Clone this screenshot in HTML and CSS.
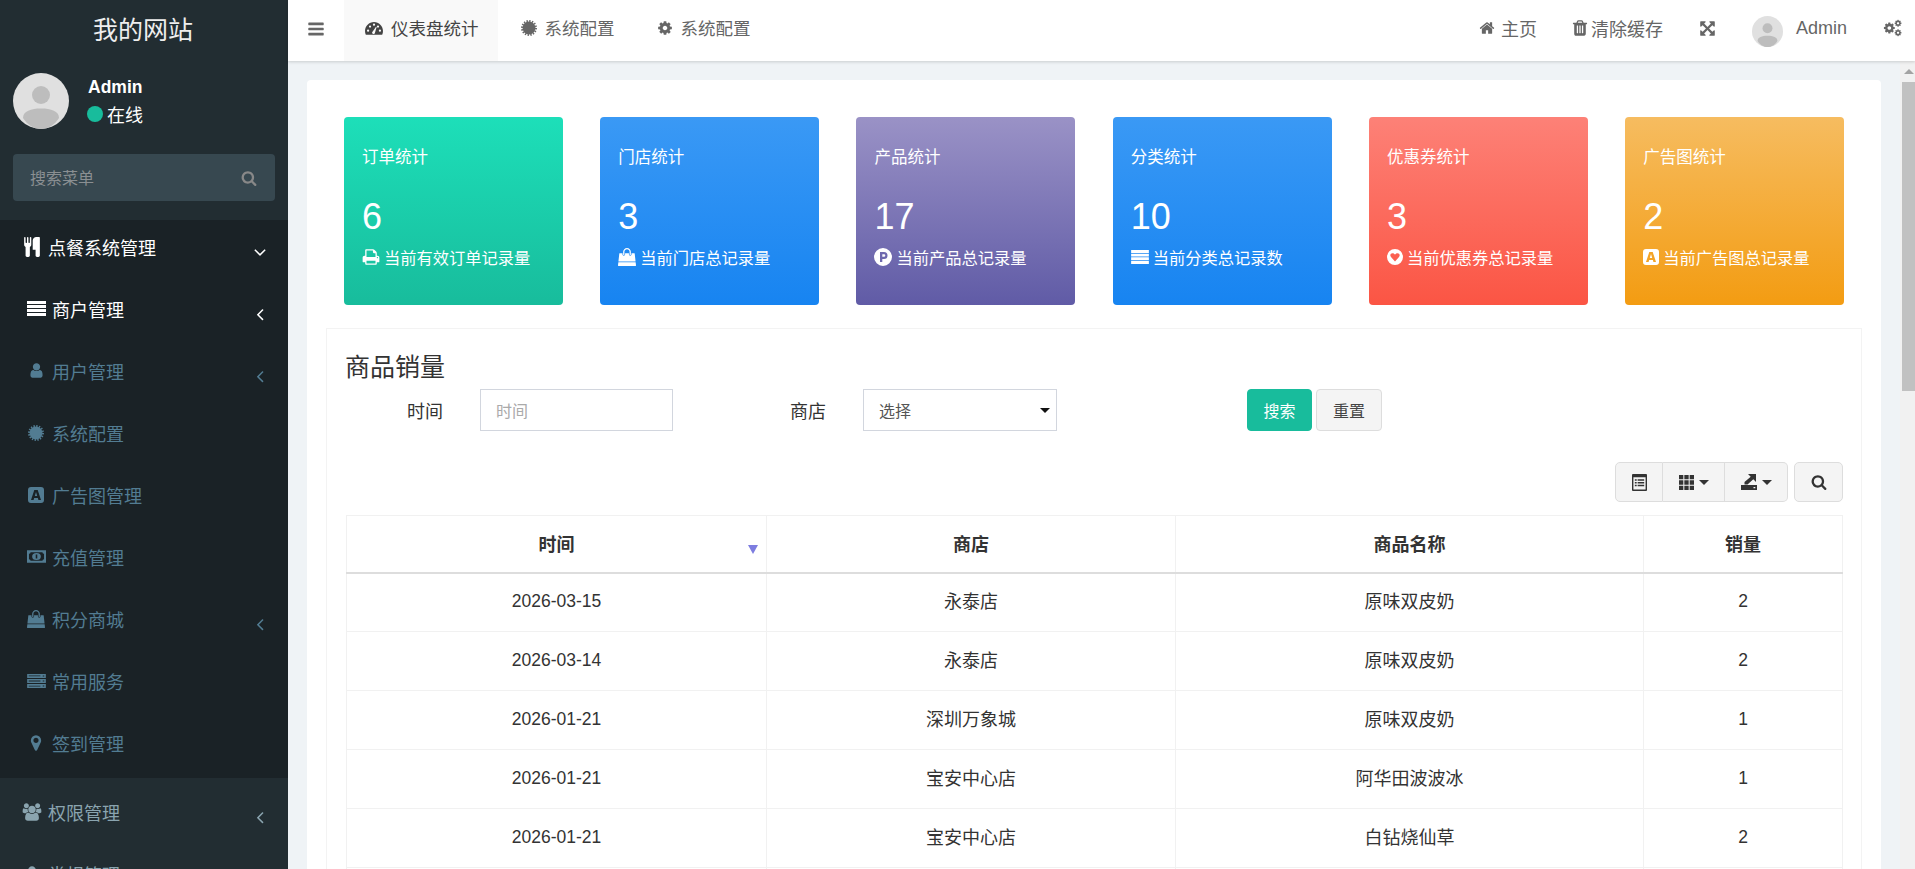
FILE: index.html
```html
<!DOCTYPE html>
<html lang="zh-CN">
<head>
<meta charset="utf-8">
<title>我的网站</title>
<link rel="stylesheet" href="styles.css">
</head>
<body>
<svg class="sprite" xmlns="http://www.w3.org/2000/svg">
  <symbol id="i-bars" viewBox="0 0 1792 1792"><path d="M1664 1344v128q0 26-19 45t-45 19h-1408q-26 0-45-19t-19-45v-128q0-26 19-45t45-19h1408q26 0 45 19t19 45zm0-512v128q0 26-19 45t-45 19h-1408q-26 0-45-19t-19-45v-128q0-26 19-45t45-19h1408q26 0 45 19t19 45zm0-512v128q0 26-19 45t-45 19h-1408q-26 0-45-19t-19-45v-128q0-26 19-45t45-19h1408q26 0 45 19t19 45z"/></symbol>
  <symbol id="i-search" viewBox="0 0 1792 1792"><path d="M1216 832q0-185-131.500-316.500t-316.500-131.500-316.500 131.500-131.500 316.500 131.500 316.500 316.500 131.500 316.500-131.500 131.500-316.500zm512 832q0 52-38 90t-90 38q-54 0-90-38l-343-342q-179 124-399 124-143 0-273.500-55.500t-225-150-150-225-55.500-273.500 55.500-273.500 150-225 225-150 273.500-55.500 273.500 55.500 225 150 150 225 55.500 273.500q0 220-124 399l343 343q37 37 37 90z"/></symbol>
  <symbol id="i-home" viewBox="0 0 1792 1792"><path d="M1472 992v480q0 26-19 45t-45 19h-384v-384h-256v384h-384q-26 0-45-19t-19-45v-480q0-1 .5-3t.5-3l575-474 575 474q1 2 1 6zm223-69l-62 74q-8 9-21 11h-3q-13 0-21-7l-692-577-692 577q-12 8-24 7-13-2-21-11l-62-74q-8-10-7-23.500t11-21.500l719-599q32-26 76-26t76 26l244 204v-195q0-14 9-23t23-9h192q14 0 23 9t9 23v408l219 182q10 8 11 21.500t-7 23.500z"/></symbol>
  <symbol id="i-user" viewBox="0 0 1792 1792"><path d="M1536 1399q0 109-62.500 187t-150.500 78h-854q-88 0-150.500-78t-62.500-187q0-85 8.500-160.500t31.500-152 58.500-131 94-89 134.500-34.500q131 128 313 128t313-128q76 0 134.500 34.500t94 89 58.500 131 31.500 152 8.500 160.500zm-256-887q0 159-112.500 271.500t-271.500 112.500-271.500-112.500-112.500-271.500 112.500-271.500 271.500-112.500 271.500 112.500 112.500 271.500z"/></symbol>
  <symbol id="i-left" viewBox="0 0 1792 1792"><path d="M1203 544q0 13-10 23l-393 393 393 393q10 10 10 23t-10 23l-50 50q-10 10-23 10t-23-10l-466-466q-10-10-10-23t10-23l466-466q10-10 23-10t23 10l50 50q10 10 10 23z"/></symbol>
  <symbol id="i-down" viewBox="0 0 1792 1792"><path d="M1395 736q0 13-10 23l-466 466q-10 10-23 10t-23-10l-466-466q-10-10-10-23t10-23l50-50q10-10 23-10t23 10l393 393 393-393q10-10 23-10t23 10l50 50q10 10 10 23z"/></symbol>
  <symbol id="i-marker" viewBox="0 0 1792 1792"><path d="M1152 640q0-106-75-181t-181-75-181 75-75 181 75 181 181 75 181-75 75-181zm256 0q0 109-33 179l-364 774q-16 33-47.500 52t-67.500 19-67.500-19-46.500-52l-365-774q-33-70-33-179 0-212 150-362t362-150 362 150 150 362z"/></symbol>
  <symbol id="i-trash" viewBox="0 0 1792 1792"><path d="M704 1376v-704q0-14-9-23t-23-9h-64q-14 0-23 9t-9 23v704q0 14 9 23t23 9h64q14 0 23-9t9-23zm256 0v-704q0-14-9-23t-23-9h-64q-14 0-23 9t-9 23v704q0 14 9 23t23 9h64q14 0 23-9t9-23zm256 0v-704q0-14-9-23t-23-9h-64q-14 0-23 9t-9 23v704q0 14 9 23t23 9h64q14 0 23-9t9-23zm-544-992h448l-48-117q-7-9-17-11h-317q-10 2-17 11zm928 32v64q0 14-9 23t-23 9h-96v948q0 83-47 143.500t-113 60.500h-832q-66 0-113-58.500t-47-141.500v-952h-96q-14 0-23-9t-9-23v-64q0-14 9-23t23-9h309l70-167q15-37 54-63t79-26h320q40 0 79 26t54 63l70 167h309q14 0 23 9t9 23z"/></symbol>
  <symbol id="i-cog" viewBox="0 0 1792 1792"><path d="M1152 896q0-106-75-181t-181-75-181 75-75 181 75 181 181 75 181-75 75-181zm512-109v222q0 12-8 23t-20 13l-185 28q-19 54-39 91 35 50 107 138 10 12 10 25t-9 23q-27 37-99 108t-94 71q-12 0-26-9l-138-108q-44 23-91 38-16 136-29 186-7 28-36 28h-222q-14 0-24.500-8.500t-11.500-21.500l-28-184q-49-16-90-37l-141 107q-10 9-25 9-14 0-25-11-126-114-165-168-7-10-7-23 0-12 8-23 15-21 51-66.500t54-70.500q-27-50-41-99l-183-27q-13-2-21-12.500t-8-23.500v-222q0-12 8-23t19-13l186-28q14-46 39-92-40-57-107-138-10-12-10-24 0-10 9-23 26-36 98.500-107.500t94.500-71.500q13 0 26 10l138 107q44-23 91-38 16-136 29-186 7-28 36-28h222q14 0 24.500 8.500t11.500 21.500l28 184q49 16 90 37l142-107q9-9 24-9 13 0 25 10 129 119 165 170 7 8 7 22 0 12-8 23-15 21-51 66.500t-54 70.500q26 50 41 98l183 28q13 2 21 12.500t8 23.500z"/></symbol>
  <symbol id="i-users" viewBox="0 0 2048 1792"><path d="M657 896q-162 5-265 128h-134q-82 0-138-40.500t-56-118.500q0-353 124-353 6 0 43.500 21t97.500 42.500 119 21.500q67 0 133-23-5 37-5 66 0 139 81 256zm1071 637q0 120-73 189.500t-194 69.500h-874q-121 0-194-69.500t-73-189.500q0-53 3.500-103.500t14-109 26.500-108.500 43-97.500 62-81 85.500-53.500 111.500-20q10 0 43 21.500t73 48 107 48 135 21.500 135-21.500 107-48 73-48 43-21.500q61 0 111.500 20t85.500 53.500 62 81 43 97.500 26.500 108.500 14 109 3.500 103.500zm-1024-1277q0 106-75 181t-181 75-181-75-75-181 75-181 181-75 181 75 75 181zm704 384q0 159-112.500 271.500t-271.500 112.500-271.500-112.500-112.500-271.500 112.500-271.500 271.500-112.500 271.500 112.500 112.500 271.500zm576 225q0 78-56 118.500t-138 40.500h-134q-103-123-265-128 81-117 81-256 0-29-5-66 66 23 133 23 59 0 119-21.500t97.500-42.500 43.500-21q124 0 124 353zm-128-609q0 106-75 181t-181 75-181-75-75-181 75-181 181-75 181 75 75 181z"/></symbol>
  <symbol id="i-bag" viewBox="0 0 1792 1792"><path d="M1757 1408l35 313q3 28-16 50-19 21-48 21h-1664q-29 0-48-21-19-22-16-50l35-313h1722zm-93-839l86 775h-1708l86-775q3-24 21-40.500t43-16.500h256v128q0 53 37.500 90.500t90.500 37.500 90.500-37.500 37.500-90.500v-128h384v128q0 53 37.500 90.500t90.500 37.500 90.500-37.500 37.500-90.500v-128h256q25 0 43 16.500t21 40.500zm-384-185v256q0 26-19 45t-45 19-45-19-19-45v-256q0-106-75-181t-181-75-181 75-75 181v256q0 26-19 45t-45 19-45-19-19-45v-256q0-159 112.500-271.500t271.500-112.500 271.500 112.500 112.500 271.500z"/></symbol>
  <symbol id="i-arrows" viewBox="0 0 1792 1792"><path d="M1411 541l-355 355 355 355 144-144q29-31 70-14 39 17 39 59v448q0 26-19 45t-45 19h-448q-42 0-59-40-17-39 14-69l144-144-355-355-355 355 144 144q31 30 14 69-17 40-59 40h-448q-26 0-45-19t-19-45v-448q0-42 40-59 39-17 69 14l144 144 355-355-355-355-144 144q-19 19-45 19-12 0-24-5-40-17-40-59v-448q0-26 19-45t45-19h448q42 0 59 40 17 39-14 69l-144 144 355 355 355-355-144-144q-31-30-14-69 17-40 59-40h448q26 0 45 19t19 45v448q0 42-39 59-13 5-25 5-26 0-45-19z"/></symbol>
  <symbol id="i-print" viewBox="0 0 1792 1792"><path d="M448 1536h896v-256h-896v256zm0-640h896v-384h-160q-40 0-68-28t-28-68v-160h-640v640zm1152 64q0-26-19-45t-45-19-45 19-19 45 19 45 45 19 45-19 19-45zm128 0v416q0 13-9.500 22.500t-22.500 9.500h-224v160q0 40-28 68t-68 28h-960q-40 0-68-28t-28-68v-160h-224q-13 0-22.500-9.500t-9.500-22.500v-416q0-79 56.500-135.500t135.500-56.500h64v-544q0-40 28-68t68-28h672q40 0 88 20t76 48l152 152q28 28 48 76t20 88v256h64q79 0 135.500 56.500t56.500 135.500z"/></symbol>
  <symbol id="i-cutlery" viewBox="0 0 1408 1792"><path d="M640 64v640q0 61-35.500 111t-92.500 70v779q0 52-38 90t-90 38h-128q-52 0-90-38t-38-90v-779q-57-20-92.500-70t-35.500-111v-640q0-26 19-45t45-19 45 19 19 45v416q0 26 19 45t45 19 45-19 19-45v-416q0-26 19-45t45-19 45 19 19 45v416q0 26 19 45t45 19 45-19 19-45v-416q0-26 19-45t45-19 45 19 19 45zm768 0v1600q0 52-38 90t-90 38h-128q-52 0-90-38t-38-90v-512h-224q-13 0-22.500-9.500t-9.500-22.500v-800q0-132 94-226t226-94h256q26 0 45 19t19 45z"/></symbol>
  <symbol id="i-rows" viewBox="0 0 19 15"><path d="M0 0h19v3.100H0zM0 3.900h19v3.100H0zM0 7.900h19v3.100H0zM0 11.900h19v3.100H0z"/></symbol>
  <symbol id="i-cert" viewBox="0 0 24 24"><circle cx="12" cy="12" r="9.700"/><circle cx="12" cy="12" r="10.500" fill="none" stroke="currentColor" stroke-width="3" stroke-dasharray="2.062 2.062"/></symbol>
  <symbol id="i-ads" viewBox="0 0 16 16"><path fill-rule="evenodd" d="M3 0h10a3 3 0 0 1 3 3v10a3 3 0 0 1-3 3H3a3 3 0 0 1-3-3V3a3 3 0 0 1 3-3zM6.300 3 3 13h2.600l.5-2h3.800l.5 2H13L9.700 3zM6.800 9 8 5l1.200 4z"/></symbol>
  <symbol id="i-money" viewBox="0 0 24 16"><path fill-rule="evenodd" d="M0 0h24v16H0zM4.500 2.500a2 2 0 0 1-2 2v7a2 2 0 0 1 2 2h15a2 2 0 0 1 2-2v-7a2 2 0 0 1-2-2zM6.500 8a5.500 4.500 0 1 0 11 0a5.500 4.500 0 1 0-11 0zM11 5.500h2v5h-2z"/></symbol>
  <symbol id="i-server" viewBox="0 0 24 18"><path fill-rule="evenodd" d="M0 0h24v5H0zM2 2v1h15V2zM20 1.800v1.400h2V1.800zM0 6.500h24v5H0zM2 8.500v1h15v-1zM20 8.300v1.400h2V8.300zM0 13h24v5H0zM2 15v1h15v-1zM20 14.800v1.400h2v-1.400z"/></symbol>
  <symbol id="i-gauge" viewBox="0 0 24 18"><path fill-rule="evenodd" d="M12 1C5.400 1 0 6.400 0 13c0 1.800.4 3.500 1.100 5h21.800c.7-1.500 1.100-3.200 1.100-5C24 6.400 18.600 1 12 1zM2.600 12.500a1.500 1.500 0 1 0 3 0a1.500 1.500 0 1 0-3 0zM5.200 7a1.500 1.500 0 1 0 3 0a1.500 1.500 0 1 0-3 0zM10.500 4.500a1.500 1.500 0 1 0 3 0a1.500 1.500 0 1 0-3 0zM18.400 12.500a1.500 1.500 0 1 0 3 0a1.500 1.500 0 1 0-3 0zM15.800 7a1.500 1.500 0 1 0 3 0a1.500 1.500 0 1 0-3 0zM10.300 13.600 14.700 7.200 15.500 7.700 13.300 15.200a1.900 1.900 0 1 1-3-1.600z"/></symbol>
  <symbol id="i-pcircle" viewBox="0 0 18 18"><path fill-rule="evenodd" d="M9 0a9 9 0 1 1 0 18a9 9 0 1 1 0-18zM6 4v10h2.300v-3H10a3.500 3.500 0 0 0 0-7zM8.300 6.200H10a1.300 1.300 0 0 1 0 2.600H8.300z"/></symbol>
  <symbol id="i-heart" viewBox="0 0 16 16"><path fill-rule="evenodd" d="M8 0a8 8 0 1 1 0 16a8 8 0 1 1 0-16zM8 12.500 12 8c1.400-1.700.5-3.800-1.500-3.800-1.200 0-2 .7-2.500 1.400-.5-.7-1.300-1.400-2.500-1.400C3.500 4.200 2.600 6.300 4 8z"/></symbol>
  <symbol id="i-listalt" viewBox="0 0 16 18"><path fill-rule="evenodd" d="M1 0h14a1 1 0 0 1 1 1v16a1 1 0 0 1-1 1H1a1 1 0 0 1-1-1V1a1 1 0 0 1 1-1zM1.500 3.500v13h13v-13zM3 5.500h2v1.500H3zM6 5.500h7v1.500H6zM3 8.500h2V10H3zM6 8.500h7V10H6zM3 11.500h2V13H3zM6 11.500h7V13H6z"/></symbol>
  <symbol id="i-grid" viewBox="0 0 16 16"><path d="M0 0h4.600v4.600H0zM5.700 0h4.600v4.600H5.700zM11.400 0H16v4.600h-4.600zM0 5.700h4.600v4.600H0zM5.700 5.700h4.600v4.600H5.700zM11.400 5.700H16v4.600h-4.600zM0 11.400h4.600V16H0zM5.700 11.400h4.600V16H5.700zM11.400 11.400H16V16h-4.600z"/></symbol>
  <symbol id="i-export" viewBox="0 0 16 16"><path fill-rule="evenodd" d="M0 11h16v5H0zM12.500 13v1.200h1.800V13z"/><path d="M7 0H15V8L12.300 5.300 6.500 10.500H3.500V8L9.700 2.700z"/></symbol>
  <symbol id="i-avatar" viewBox="0 0 56 56"><circle cx="28" cy="28" r="28" fill="#e0e0e0"/><circle cx="28" cy="22" r="9" fill="#bdbdbd"/><path fill="#bdbdbd" d="M10 45c0-7 8-9.500 18-9.500S46 38 46 45c-4 6.500-10.500 11-18 11S14 51.500 10 45z"/></symbol>
</svg>

<div class="app">
  <aside class="sidebar">
    <div class="logo">我的网站</div>
    <div class="user-panel">
      <svg class="avatar-lg"><use href="#i-avatar"/></svg>
      <div class="user-info">
        <div class="user-name latin">Admin</div>
        <div class="user-status"><span class="dot"></span>在线</div>
      </div>
    </div>
    <form class="side-search">
      <input class="side-search-input" type="text" placeholder="搜索菜单">
      <svg class="ico side-search-ico"><use href="#i-search"/></svg>
    </form>
    <ul class="nav nav-open">
      <li class="nav-item nav-top nav-lit">
        <svg class="ico ico-cutlery"><use href="#i-cutlery"/></svg><span class="nav-text">点餐系统管理</span>
        <svg class="ico nav-arrow-down"><use href="#i-down"/></svg>
      </li>
      <li class="nav-item nav-lit">
        <span class="nav-ico"><svg class="ico ico-19"><use href="#i-rows"/></svg></span><span class="nav-text">商户管理</span>
        <svg class="ico nav-arrow"><use href="#i-left"/></svg>
      </li>
      <li class="nav-item">
        <span class="nav-ico"><svg class="ico ico-17"><use href="#i-user"/></svg></span><span class="nav-text">用户管理</span>
        <svg class="ico nav-arrow"><use href="#i-left"/></svg>
      </li>
      <li class="nav-item">
        <span class="nav-ico"><svg class="ico ico-16"><use href="#i-cert"/></svg></span><span class="nav-text">系统配置</span>
      </li>
      <li class="nav-item">
        <span class="nav-ico"><svg class="ico ico-16"><use href="#i-ads"/></svg></span><span class="nav-text">广告图管理</span>
      </li>
      <li class="nav-item">
        <span class="nav-ico"><svg class="ico ico-money"><use href="#i-money"/></svg></span><span class="nav-text">充值管理</span>
      </li>
      <li class="nav-item">
        <span class="nav-ico"><svg class="ico ico-18"><use href="#i-bag"/></svg></span><span class="nav-text">积分商城</span>
        <svg class="ico nav-arrow"><use href="#i-left"/></svg>
      </li>
      <li class="nav-item">
        <span class="nav-ico"><svg class="ico ico-server"><use href="#i-server"/></svg></span><span class="nav-text">常用服务</span>
      </li>
      <li class="nav-item">
        <span class="nav-ico"><svg class="ico ico-18"><use href="#i-marker"/></svg></span><span class="nav-text">签到管理</span>
      </li>
    </ul>
    <ul class="nav nav-rest">
      <li class="nav-item nav-top nav-top-muted">
        <svg class="ico ico-users"><use href="#i-users"/></svg><span class="nav-text">权限管理</span>
        <svg class="ico nav-arrow"><use href="#i-left"/></svg>
      </li>
      <li class="nav-item nav-top nav-top-muted">
        <svg class="ico ico-users"><use href="#i-user"/></svg><span class="nav-text">常规管理</span>
      </li>
    </ul>
  </aside>

  <div class="main">
    <header class="topbar">
      <a class="burger"><svg class="ico ico-18"><use href="#i-bars"/></svg></a>
      <a class="tab tab-active"><svg class="ico ico-gauge"><use href="#i-gauge"/></svg>仪表盘统计</a>
      <a class="tab"><svg class="ico ico-16"><use href="#i-cert"/></svg>系统配置</a>
      <a class="tab"><svg class="ico ico-16"><use href="#i-cog"/></svg>系统配置</a>
      <div class="top-right">
        <a class="top-link"><svg class="ico ico-16"><use href="#i-home"/></svg>主页</a>
        <a class="top-link top-link-trash"><svg class="ico ico-18"><use href="#i-trash"/></svg>清除缓存</a>
        <a class="top-link"><svg class="ico ico-17"><use href="#i-arrows"/></svg></a>
        <a class="top-user latin"><svg class="avatar-sm"><use href="#i-avatar"/></svg>Admin</a>
        <a class="top-link"><svg class="ico ico-cogs" viewBox="0 0 24 22"><use href="#i-cog" x="0" y="3" width="16" height="16"/><use href="#i-cog" x="14" y="0" width="10" height="10"/><use href="#i-cog" x="14" y="12" width="10" height="10"/></svg></a>
      </div>
    </header>

    <div class="body-row">
      <main class="content">
        <section class="panel">
          <div class="cards">
            <div class="card card-teal">
              <div class="card-title">订单统计</div>
              <div class="card-num latin">6</div>
              <div class="card-sub"><svg class="ico ico-18"><use href="#i-print"/></svg>当前有效订单记录量</div>
            </div>
            <div class="card card-blue">
              <div class="card-title">门店统计</div>
              <div class="card-num latin">3</div>
              <div class="card-sub"><svg class="ico ico-18"><use href="#i-bag"/></svg>当前门店总记录量</div>
            </div>
            <div class="card card-purple">
              <div class="card-title">产品统计</div>
              <div class="card-num latin">17</div>
              <div class="card-sub"><svg class="ico ico-18"><use href="#i-pcircle"/></svg>当前产品总记录量</div>
            </div>
            <div class="card card-blue">
              <div class="card-title">分类统计</div>
              <div class="card-num latin">10</div>
              <div class="card-sub"><svg class="ico ico-bars18"><use href="#i-rows"/></svg>当前分类总记录数</div>
            </div>
            <div class="card card-red">
              <div class="card-title">优惠券统计</div>
              <div class="card-num latin">3</div>
              <div class="card-sub"><svg class="ico ico-16"><use href="#i-heart"/></svg>当前优惠券总记录量</div>
            </div>
            <div class="card card-orange">
              <div class="card-title">广告图统计</div>
              <div class="card-num latin">2</div>
              <div class="card-sub"><svg class="ico ico-16"><use href="#i-ads"/></svg>当前广告图总记录量</div>
            </div>
          </div>

          <div class="box">
            <h3 class="box-title">商品销量</h3>
            <form class="filter">
              <label class="filter-label filter-label-first">时间</label>
              <input class="filter-input" type="text" placeholder="时间">
              <label class="filter-label filter-label-second">商店</label>
              <span class="select-wrap">
                <select class="filter-input filter-select"><option>选择</option></select>
              </span>
              <div class="filter-btns">
                <button class="btn btn-primary" type="button">搜索</button>
                <button class="btn btn-default" type="button">重置</button>
              </div>
            </form>

            <div class="toolbar">
              <div class="btn-group">
                <button class="tool tool-a" type="button"><svg class="ico ico-16h"><use href="#i-listalt"/></svg></button>
                <button class="tool tool-b" type="button"><svg class="ico ico-15"><use href="#i-grid"/></svg><span class="caret"></span></button>
                <button class="tool tool-c" type="button"><svg class="ico ico-16"><use href="#i-export"/></svg><span class="caret"></span></button>
              </div>
              <button class="tool tool-search" type="button"><svg class="ico ico-16"><use href="#i-search"/></svg></button>
            </div>

            <table class="grid">
              <colgroup>
                <col class="col-date"><col class="col-store"><col class="col-name"><col class="col-qty">
              </colgroup>
              <thead>
                <tr><th class="sorted">时间<span class="sort-mark"></span></th><th>商店</th><th>商品名称</th><th>销量</th></tr>
              </thead>
              <tbody>
                <tr><td class="latin">2026-03-15</td><td>永泰店</td><td>原味双皮奶</td><td class="latin">2</td></tr>
                <tr><td class="latin">2026-03-14</td><td>永泰店</td><td>原味双皮奶</td><td class="latin">2</td></tr>
                <tr><td class="latin">2026-01-21</td><td>深圳万象城</td><td>原味双皮奶</td><td class="latin">1</td></tr>
                <tr><td class="latin">2026-01-21</td><td>宝安中心店</td><td>阿华田波波冰</td><td class="latin">1</td></tr>
                <tr><td class="latin">2026-01-21</td><td>宝安中心店</td><td>白钻烧仙草</td><td class="latin">2</td></tr>
                <tr><td></td><td></td><td></td><td></td></tr>
              </tbody>
            </table>
          </div>
        </section>
      </main>
      <div class="scrollbar">
        <span class="scroll-up"></span>
        <span class="scroll-thumb"></span>
      </div>
    </div>
  </div>
</div>
</body>
</html>
```

FILE: styles.css
```css
* { box-sizing: border-box; }
html, body { height: 100%; }
body {
  margin: 0;
  overflow: hidden;
  font-family: "Noto Sans CJK SC", "Liberation Sans", sans-serif;
  font-size: 18px;
  color: #333;
  background: #eff3f6;
}
.latin { font-family: "Liberation Sans", "Noto Sans CJK SC", sans-serif; }
ul { list-style: none; margin: 0; padding: 0; }
.sprite { display: none; }
.ico { fill: currentColor; flex: none; display: block; }
.ico-15 { width: 15px; height: 15px; }
.ico-16 { width: 16px; height: 16px; }
.ico-16h { width: 15px; height: 17px; }
.ico-17 { width: 17px; height: 17px; }
.ico-18 { width: 18px; height: 18px; }
.ico-19 { width: 19px; height: 15px; }
.ico-money { width: 19px; height: 13px; }
.ico-server { width: 19px; height: 14px; }
.ico-gauge { width: 18px; height: 14px; }
.ico-cutlery { width: 16px; height: 20px; }
.ico-users { width: 20px; height: 18px; }
.ico-cogs { width: 19px; height: 18px; }
.ico-bars18 { width: 18px; height: 14px; }

.app { display: flex; height: 100vh; }

/* sidebar */
.sidebar {
  width: 288px;
  flex: none;
  background: #222d32;
  overflow: hidden;
  display: flex;
  flex-direction: column;
}
.logo {
  height: 61px;
  flex: none;
  display: flex;
  align-items: center;
  justify-content: center;
  padding: 0 2px 5px 0;
  font-size: 25px;
  color: #eee;
}
.user-panel {
  flex: none;
  display: flex;
  align-items: flex-start;
  padding: 12px 13px 0;
  gap: 19px;
}
.avatar-lg { width: 56px; height: 56px; flex: none; }
.user-info { padding-top: 2px; }
.user-name { font-size: 17.500px; font-weight: 700; color: #fff; line-height: 24px; }
.user-status { display: flex; align-items: center; gap: 4px; color: #fff; font-size: 18px; line-height: 30px; }
.dot { width: 16px; height: 16px; border-radius: 50%; background: #18bc9c; margin-left: -1px; }
.side-search {
  flex: none;
  display: flex;
  align-items: center;
  height: 47px;
  margin: 25px 13px 19px;
  padding: 0 18px 0 17px;
  background: #374850;
  border-radius: 4px;
}
.side-search-input {
  flex: 1;
  min-width: 0;
  border: 0;
  outline: 0;
  padding: 0 0 2px;
  background: transparent;
  font: inherit;
  font-size: 16px;
  color: #999;
}
.side-search-input::placeholder { color: #8a8f92; }
.side-search-ico { width: 16px; height: 16px; color: #888; }

.nav-open { flex: none; background: #1a2226; }
.nav-rest { flex: none; padding-top: 7px; }
.nav-item {
  height: 62px;
  display: flex;
  align-items: center;
  padding: 0 18px 0 26px;
  color: #527c92;
  font-size: 18px;
}
.nav-ico { width: 20px; height: 20px; display: flex; align-items: center; justify-content: center; margin: 0 6px 9px 0; flex: none; }
.nav-text { padding-bottom: 9px; }
.nav-arrow, .nav-arrow-down { width: 20px; height: 20px; margin-left: auto; margin-top: 2px; }
.nav-lit { color: #fff; }
.nav-top { padding-left: 24px; }
.nav-top > .ico:first-child { margin: 0 8px 9px 0; }
.nav-top-muted { padding-left: 22px; color: #8aa4af; }
.nav-top-muted > .ico:first-child { margin: 0 6px 9px 0; }

/* main */
.main { flex: 1; min-width: 0; display: flex; flex-direction: column; }
.topbar {
  height: 61px;
  flex: none;
  display: flex;
  align-items: center;
  background: #fff;
  color: #666;
  box-shadow: 0 1px 3px rgba(0, 0, 0, .16);
  position: relative;
  z-index: 2;
}
.burger { width: 56px; height: 100%; display: flex; align-items: center; justify-content: center; padding-bottom: 4px; }
.tab {
  height: 100%;
  display: flex;
  align-items: center;
  gap: 8px;
  padding: 0 19px 6px 23px;
  font-size: 17.500px;
}
.tab-active { padding: 0 19px 6px 21px; background: #f9f9f9; color: #444; }
.top-right { margin-left: auto; display: flex; align-items: center; gap: 36px; padding: 0 13px 5px 0; }
.top-link { display: flex; align-items: center; gap: 6px; }
.top-link-trash { gap: 2px; margin-left: -2px; }
.top-user { display: flex; align-items: center; gap: 13px; font-size: 18px; }
.avatar-sm { width: 31px; height: 31px; flex: none; margin-top: 7px; }

.body-row { flex: 1; min-height: 0; display: flex; }
.content { flex: 1; min-width: 0; overflow: hidden; padding: 19px 19px 0; }
.panel {
  background: #fff;
  border-radius: 4px;
  padding: 37px 19px;
}
.cards {
  display: grid;
  grid-template-columns: repeat(6, 1fr);
  column-gap: 37.400px;
  margin: 0 18px;
}
.card {
  height: 188px;
  border-radius: 4px;
  padding: 26px 18px 0;
  color: #fff;
}
.card-teal { background: linear-gradient(#1ddfb9, #18bc9c); }
.card-blue { background: linear-gradient(#3a99f5, #1784f1); }
.card-purple { background: linear-gradient(#9a92c6, #605ba6); }
.card-red { background: linear-gradient(#fd8177, #fb5544); }
.card-orange { background: linear-gradient(#f6bc60, #f39c12); }
.card-title { font-size: 16.500px; line-height: 26px; }
.card-num { font-size: 36px; line-height: 50px; margin-top: 23px; }
.card-sub { display: flex; align-items: center; gap: 4px; font-size: 16.250px; line-height: 24px; margin-top: 3px; }

.box {
  margin-top: 23px;
  border: 1px solid #f3f3f3;
  padding: 20px 18px 0 19px;
}
.box-title { margin: 0 0 0 -1px; height: 40px; font-size: 25px; font-weight: 400; line-height: 32px; color: #333; }
.filter { display: flex; align-items: center; height: 42px; }
.filter-label { flex: none; text-align: right; font-size: 18px; margin-right: 37px; color: #333; }
.filter-label-first { width: 97px; }
.filter-label-second { width: 153px; }
.filter-input {
  width: 193px;
  height: 42px;
  border: 1px solid #d2d6de;
  background: #fff;
  padding: 0 15px;
  font: inherit;
  font-size: 16px;
  color: #555;
  border-radius: 0;
  outline: 0;
  display: block;
}
.filter-input::placeholder { color: #aaa; }
.filter-select { appearance: none; width: 194px; }
.select-wrap { position: relative; display: block; }
.select-wrap::after {
  content: "";
  position: absolute;
  right: 7px;
  top: 19px;
  border-left: 5px solid transparent;
  border-right: 5px solid transparent;
  border-top: 5px solid #111;
}
.filter-btns { display: flex; gap: 4px; margin-left: 190px; }
.btn {
  width: 65px;
  height: 42px;
  border-radius: 4px;
  font: inherit;
  font-size: 16px;
  padding: 0;
}
.btn-primary { background: #18bc9c; border: 1px solid #18bc9c; color: #fff; }
.btn-default { width: 66px; background: #f4f4f4; border: 1px solid #ddd; color: #444; }

.toolbar { display: flex; justify-content: flex-end; gap: 6px; margin-top: 31px; }
.btn-group { display: flex; }
.tool {
  height: 40px;
  background: #f4f4f4;
  border: 1px solid #ddd;
  color: #333;
  display: flex;
  align-items: center;
  justify-content: center;
  gap: 5px;
  padding: 0;
}
.btn-group .tool + .tool { border-left: 0; }
.tool-a { width: 48px; border-radius: 5px 0 0 5px; }
.tool-b { width: 62px; }
.tool-c { width: 63px; border-radius: 0 5px 5px 0; }
.tool-search { width: 49px; border-radius: 5px; }
.caret {
  width: 0;
  height: 0;
  border-left: 5px solid transparent;
  border-right: 5px solid transparent;
  border-top: 5px solid #333;
}

.grid {
  width: 1496px;
  margin-top: 13px;
  border-collapse: collapse;
  table-layout: fixed;
  font-size: 18px;
  color: #333;
}
.col-date { width: 420px; }
.col-store { width: 409px; }
.col-name { width: 468px; }
.col-qty { width: 199px; }
.grid th, .grid td { border: 1px solid #f1f1f1; text-align: center; padding: 0; }
.grid th { height: 57px; font-weight: 700; border-bottom: 2px solid #ddd; padding-bottom: 2px; position: relative; }
.grid td { height: 59px; padding-bottom: 4px; }
.grid td.latin { font-size: 17.500px; padding-bottom: 2px; }
.sort-mark {
  position: absolute;
  right: 8px;
  top: 29px;
  border-left: 5px solid transparent;
  border-right: 5px solid transparent;
  border-top: 9px solid #7d7de0;
}

.scrollbar { width: 15px; flex: none; background: #f1f1f1; display: flex; flex-direction: column; align-items: flex-end; }
.scroll-up {
  margin: 8px 1px 0 0;
  width: 0;
  height: 0;
  border-left: 5px solid transparent;
  border-right: 5px solid transparent;
  border-bottom: 5px solid #a3a3a3;
}
.scroll-thumb { width: 13px; height: 309px; margin-top: 8px; background: #c1c1c1; }
```
